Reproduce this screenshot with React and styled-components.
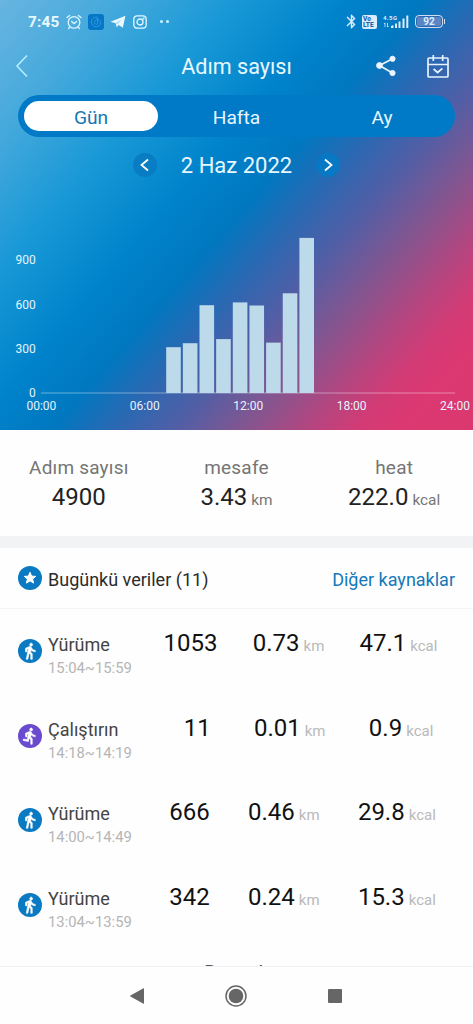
import React from 'react'
import styled, { createGlobalStyle } from 'styled-components'
import { MdBluetooth } from 'react-icons/md'

const GlobalStyle = createGlobalStyle`
  * {
    box-sizing: border-box;
  }
  body {
    margin: 0;
    background: #fefefe;
    font-family: Roboto, "Noto Sans", sans-serif;
  }
`

const steps = [
  { hour: 7, value: 311 },
  { hour: 8, value: 338 },
  { hour: 9, value: 596 },
  { hour: 10, value: 366 },
  { hour: 11, value: 615 },
  { hour: 12, value: 594 },
  { hour: 13, value: 342 },
  { hour: 14, value: 677 },
  { hour: 15, value: 1053 },
]

const records = [
  { type: 'walk', name: 'Yürüme', time: '15:04~15:59', steps: '1053', km: '0.73', kcal: '47.1', indent: 0 },
  { type: 'run', name: 'Çalıştırın', time: '14:18~14:19', steps: '11', km: '0.01', kcal: '0.9', indent: 16 },
  { type: 'walk', name: 'Yürüme', time: '14:00~14:49', steps: '666', km: '0.46', kcal: '29.8', indent: 4 },
  { type: 'walk', name: 'Yürüme', time: '13:04~13:59', steps: '342', km: '0.24', kcal: '15.3', indent: 4 },
]

const figures = {
  walk: 'M13.5 5.5c1.1 0 2-.9 2-2s-.9-2-2-2-2 .9-2 2 .9 2 2 2zM9.8 8.900L7 23h2.100l1.800-8 2.100 2v6h2v-7.500l-2.100-2 .6-3C14.800 12 16.800 13 19 13v-2c-1.900 0-3.500-1-4.300-2.400l-1-1.600c-.4-.6-1-1-1.700-1-.3 0-.5.100-.8.100L6 8.300V13h2V9.600l1.800-.7',
  run: 'M13.490 5.480c1.100 0 2-.9 2-2s-.9-2-2-2-2 .9-2 2 .9 2 2 2zm-3.600 13.900l1-4.400 2.100 2v6h2v-7.500l-2.100-2 .6-3c1.300 1.500 3.300 2.500 5.500 2.500v-2c-1.900 0-3.500-1-4.300-2.400l-1-1.600c-.4-.6-1-1-1.700-1-.3 0-.5.100-.8.100l-5.200 2.200v4.700h2v-3.400l1.800-.7-1.600 8.100-4.900-1-.4 2 7 1.400z',
}

function StatusBar() {
  return (
    <Status>
      <Clock>7:45</Clock>
      <svg width="16" height="16" viewBox="0 0 16 16" fill="none" stroke="#d9f5ff" strokeWidth="1.3" strokeLinecap="round">
        <circle cx="8" cy="8.4" r="5.8" />
        <path d="M1 3.6L3.6 1.4M15 3.6L12.4 1.4M5.6 7.4L8 9.6L10.6 7.4M3.6 13.2L2.6 14.6M12.4 13.2L13.4 14.6" />
      </svg>
      <AppBadge>
        <svg width="12" height="12" viewBox="0 0 12 12" fill="none" stroke="#2c9be0" strokeWidth="1">
          <path d="M7 1.2C3.6.8 1.4 3 1.4 6S3.8 10.8 6.2 10.8S10.6 9 10.6 6.6S9 3.6 7.2 3.6S4.4 5 4.4 6.6S7 9 7.6 7.4V1.2" />
        </svg>
      </AppBadge>
      <svg width="16" height="14" viewBox="0 0 16 14" fill="#e8f9ff">
        <path d="M15.500.800L12.800 12.800L8.600 9.900L6.700 12.200L5.700 8.300L.500 6.700Z" />
        <path d="M6 8.200L11.500 4.600L7 8.900Z" fill="#7cc6ea" />
      </svg>
      <svg width="14" height="14" viewBox="0 0 14 14" fill="none" stroke="#e4f8ff" strokeWidth="1.3">
        <rect x=".8" y=".8" width="12.4" height="12.4" rx="3.4" />
        <circle cx="7" cy="7" r="3" />
        <circle cx="10.6" cy="3.5" r=".4" />
      </svg>
      <Dots><i /><i /></Dots>
      <StatusRight>
        <MdBluetooth size={17} />
        <Volte><span>Vo</span><span>LTE</span></Volte>
        <Signal>
          <svg width="26" height="14" viewBox="0 0 26 14" fill="#dcecff">
            <text x="0" y="5" fontSize="6" fontWeight="700" textLength="14">4.5G</text>
            <path d="M2 8v4M1 9l1-1.200M4.500 12V8M5.500 11l-1 1.200" stroke="#dcecff" strokeWidth=".8" />
            <path d="M8 13v-2l2.400-1v3zM12 8.500h2V13h-2zM15.500 6.500h2V13h-2zM19.500 3.500h2V13h-2zM23.300.500h2V13h-2z" />
          </svg>
        </Signal>
        <Battery>92</Battery>
        <BatteryTip />
      </StatusRight>
    </Status>
  )
}

function StepChart() {
  const base = 173
  const scale = 0.1473
  return (
    <svg width="473" height="210" viewBox="0 0 473 210" fontSize="12" fill="#e6f4ff">
      {[900, 600, 300, 0].map((v) => (
        <text key={v} x="35.800" y={base + 4 - v * scale} textAnchor="end">{v}</text>
      ))}
      <rect x="41" y={base - 0.5} width="414" height="1" fill="#fff" opacity=".4" />
      {steps.map((s) => (
        <rect
          key={s.hour}
          x={166.2 + (s.hour - 7) * 16.65}
          y={base - s.value * scale}
          width="14.6"
          height={s.value * scale}
          fill="#bddaea"
        />
      ))}
      {['00:00', '06:00', '12:00', '18:00', '24:00'].map((label, i) => (
        <text key={label} x={41.4 + i * 103.4} y="190" textAnchor="middle">{label}</text>
      ))}
    </svg>
  )
}

function Record({ item }) {
  return (
    <RecordRow>
      <RoundIcon $color={item.type === 'run' ? '#6a4bd0' : '#0a7ac2'} $top={11}>
        <svg width="18" height="18" viewBox="0 0 24 24" fill="#fff" stroke="#fff" strokeWidth=".8">
          <path d={figures[item.type]} />
        </svg>
      </RoundIcon>
      <RecordInfo>
        <RecordName>{item.name}</RecordName>
        <RecordTime>{item.time}</RecordTime>
      </RecordInfo>
      <Metrics $indent={item.indent}>
        <Metric>{item.steps}</Metric>
        <Metric>{item.km}<small>km</small></Metric>
        <Metric>{item.kcal}<small>kcal</small></Metric>
      </Metrics>
    </RecordRow>
  )
}

function App() {
  return (
    <Screen>
      <GlobalStyle />
      <Hero>
        <StatusBar />
        <TitleBar>
          <svg width="14" height="24" viewBox="0 0 14 24" fill="none" stroke="#b8f0ff" strokeWidth="1.5">
            <path d="M12 1.500L2 12L12 22.500" />
          </svg>
          <Title>Adım sayısı</Title>
          <Actions>
            <svg width="22" height="22" viewBox="0 0 22 22" fill="#eaf5ff" stroke="#eaf5ff">
              <path d="M17.500 3.800L4.500 10.500L17.500 18" fill="none" strokeWidth="1.700" />
              <circle cx="4.500" cy="10.500" r="2.900" />
              <circle cx="17.500" cy="3.800" r="2.600" />
              <circle cx="17.500" cy="18" r="2.600" />
            </svg>
            <svg width="22" height="23" viewBox="0 0 22 23" fill="none" stroke="#e6f2ff" strokeWidth="1.7">
              <rect x="1" y="3" width="20" height="19" rx="1" />
              <path d="M1 9.500H21M6.300 0V6M15.700 0V6M6.600 14L10.600 17.500L15.400 13.300" />
            </svg>
          </Actions>
        </TitleBar>
        <Tabs>
          <Tab $active>Gün</Tab>
          <Tab>Hafta</Tab>
          <Tab>Ay</Tab>
        </Tabs>
        <DateBar>
          <DateButton $color="#087dc4">
            <svg width="9" height="14" viewBox="0 0 9 14" fill="none" stroke="#fff" strokeWidth="1.8"><path d="M8 1.500L1.500 7L8 12.500" /></svg>
          </DateButton>
          <DateText>2 Haz 2022</DateText>
          <DateButton $color="#0878c4">
            <svg width="9" height="14" viewBox="0 0 9 14" fill="none" stroke="#fff" strokeWidth="1.8"><path d="M1 1.500L7.500 7L1 12.500" /></svg>
          </DateButton>
        </DateBar>
        <StepChart />
      </Hero>
      <Summary>
        <Total><span>Adım sayısı</span><b>4900</b></Total>
        <Total><span>mesafe</span><b>3.43<small>km</small></b></Total>
        <Total><span>heat</span><b>222.0<small>kcal</small></b></Total>
      </Summary>
      <ListHeader>
        <RoundIcon $color="#0a7ac2" $top={0}>
          <svg width="14" height="14" viewBox="0 0 14 14" fill="#fff" stroke="#fff" strokeWidth="1" strokeLinejoin="round">
            <path d="M7 1.200L8.600 5.100L12.700 5.400L9.600 8.100L10.600 12.100L7 9.900L3.400 12.100L4.400 8.100L1.300 5.400L5.400 5.100Z" />
          </svg>
        </RoundIcon>
        <ListTitle>Bugünkü veriler (11)</ListTitle>
        <SourceLink>Diğer kaynaklar</SourceLink>
      </ListHeader>
      <Records>
        {records.map((item) => <Record key={item.time} item={item} />)}
        <RecordsFooter>Detaylı</RecordsFooter>
      </Records>
      <NavBar>
        <svg width="14" height="16" viewBox="0 0 14 16" fill="#666"><path d="M14 .800V15.200Q14 16 13 15.500L.500 8.600Q-.2 8 .500 7.400L13 .500Q14 0 14 .800Z" /></svg>
        <svg width="22" height="22" viewBox="0 0 22 22" fill="#666">
          <circle cx="11" cy="11" r="10" fill="none" stroke="#666" strokeWidth="1.500" />
          <circle cx="11" cy="11" r="7.300" />
        </svg>
        <svg width="14" height="14" viewBox="0 0 14 14" fill="#666"><rect width="14" height="14" rx="1" /></svg>
      </NavBar>
    </Screen>
  )
}

const Screen = styled.div`
  width: 473px;
  height: 1024px;
  display: flex;
  flex-direction: column;
  overflow: hidden;
`

const Hero = styled.header`
  height: 430px;
  flex: none;
  color: #e8f8ff;
  background: linear-gradient(131deg, #68b5e0 0%, #45a9dc 14%, #1898d6 28%, #0083cb 41%, #0078c0 50%, #2b68b2 57.5%, #535ea5 65%, #85558f 73%, #b24680 80%, #d23b75 86%, #dc3871 91%, #dc3870 100%);
`

const Status = styled.div`
  height: 43px;
  padding: 0 28px;
  display: flex;
  align-items: center;
`

const Clock = styled.span`
  width: 38px;
  font-size: 15.3px;
  font-weight: 700;
  letter-spacing: 0.2px;
`

const AppBadge = styled.span`
  width: 16px;
  height: 16px;
  margin: 0 6px;
  border-radius: 3px;
  background: #0676c6;
  display: grid;
  place-items: center;

  & + svg {
    margin-right: 7px;
  }
`

const Dots = styled.span`
  display: flex;
  gap: 3px;
  margin-left: 13px;

  i {
    width: 3px;
    height: 3px;
    border-radius: 50%;
    background: #d0f2ff;
  }
`

const StatusRight = styled.div`
  display: flex;
  align-items: center;
  margin-left: auto;
  color: #dcecff;
`

const Volte = styled.span`
  width: 15px;
  height: 14px;
  margin: 0 6px 0 2px;
  padding: 1px;
  border-radius: 2px;
  background: #dcecff;
  color: #1b67ad;
  display: flex;
  flex-direction: column;
  font-size: 6.5px;
  line-height: 6px;
  font-weight: 900;
`

const Signal = styled.span`
  display: flex;
  margin-right: 6px;
`

const Battery = styled.span`
  width: 28px;
  height: 13px;
  border: 1.5px solid #cfdcf2;
  border-radius: 4px;
  background: #5a86c4;
  box-shadow: inset 0 0 0 1px #2868b0;
  font-size: 10px;
  font-weight: 700;
  line-height: 11px;
  text-align: center;
`

const BatteryTip = styled.span`
  width: 1px;
  height: 5px;
  margin-left: 1px;
  background: #cfdcf2;
`

const TitleBar = styled.div`
  height: 46px;
  padding: 0 24px 0 15px;
  display: grid;
  grid-template-columns: 75px 1fr 75px;
  align-items: center;
`

const Title = styled.h1`
  margin: 0;
  padding-left: 9px;
  font-size: 21.6px;
  font-weight: 400;
  text-align: center;
`

const Actions = styled.div`
  padding-left: 1px;
  display: flex;
  align-items: center;
  justify-content: space-between;
`

const Tabs = styled.div`
  height: 42px;
  margin: 6px 18px 0;
  padding: 6px;
  border-radius: 21px;
  background: #007ac7;
  display: grid;
  grid-template-columns: 134px 1fr 134px;
  column-gap: 11px;
`

const Tab = styled.div`
  height: 30px;
  border-radius: 15px;
  background: ${(props) => (props.$active ? '#fff' : 'transparent')};
  color: ${(props) => (props.$active ? '#1678b4' : '#e6f6ff')};
  font-size: 19.2px;
  line-height: 33px;
  text-align: center;
`

const DateBar = styled.div`
  height: 56px;
  margin-bottom: 27px;
  display: flex;
  align-items: center;
  justify-content: center;
  gap: 24px;
`

const DateButton = styled.span`
  width: 24px;
  height: 24px;
  border-radius: 50%;
  background: ${(props) => props.$color};
  display: grid;
  place-items: center;
`

const DateText = styled.span`
  font-size: 22px;
`

const Summary = styled.section`
  height: 118px;
  flex: none;
  padding: 26px 0 0;
  border-bottom: 12px solid #f1f3f4;
  display: grid;
  grid-template-columns: repeat(3, 1fr);
`

const Total = styled.div`
  display: flex;
  flex-direction: column;
  align-items: center;

  span {
    color: #757575;
    font-size: 19px;
    line-height: 24px;
    letter-spacing: 0.2px;
  }
  b {
    color: #222;
    font-size: 24px;
    font-weight: 400;
    line-height: 34px;
  }
  small {
    margin-left: 4px;
    color: #777;
    font-size: 15.4px;
  }
`

const ListHeader = styled.div`
  height: 61px;
  flex: none;
  padding: 0 18px;
  border-bottom: 1px solid #f2f3f3;
  display: flex;
  align-items: center;
`

const RoundIcon = styled.span`
  width: 24px;
  height: 24px;
  flex: none;
  margin-top: ${(props) => props.$top}px;
  border-radius: 50%;
  background: ${(props) => props.$color};
  color: #fff;
  display: grid;
  place-items: center;
`

const ListTitle = styled.span`
  margin-left: 6px;
  padding-top: 2px;
  color: #2b2b2b;
  font-size: 18px;
`

const SourceLink = styled.a`
  margin-left: auto;
  padding-top: 2px;
  color: #1479b9;
  font-size: 18px;
`

const Records = styled.section`
  height: 357px;
  flex: none;
  padding-top: 19px;
  overflow: hidden;
`

const RecordRow = styled.div`
  height: 84.5px;
  padding: 0 18px;
  display: flex;
`

const RecordInfo = styled.div`
  width: 84px;
  flex: none;
  margin-left: 6px;
  padding-top: 5px;
  display: flex;
  flex-direction: column;
`

const RecordName = styled.span`
  color: #444;
  font-size: 18px;
  line-height: 24px;
`

const RecordTime = styled.span`
  color: #b5b5b5;
  font-size: 14.8px;
  line-height: 22px;
`

const Metrics = styled.div`
  flex: 1;
  margin-left: 14px;
  padding-left: ${(props) => props.$indent}px;
  display: flex;
  justify-content: space-around;
`

const Metric = styled.span`
  color: #111;
  font-size: 24px;
  line-height: 31px;
  white-space: nowrap;

  small {
    margin-left: 4px;
    color: #b9b9b9;
    font-size: 15px;
  }
`

const RecordsFooter = styled.div`
  margin-top: -2px;
  color: #555;
  font-size: 21.5px;
  line-height: 20px;
  text-align: center;
`

const NavBar = styled.nav`
  height: 58px;
  flex: none;
  padding: 0 131px 0 130px;
  border-top: 1px solid #f0f3f3;
  display: flex;
  align-items: center;
  justify-content: space-between;
`

export default App
